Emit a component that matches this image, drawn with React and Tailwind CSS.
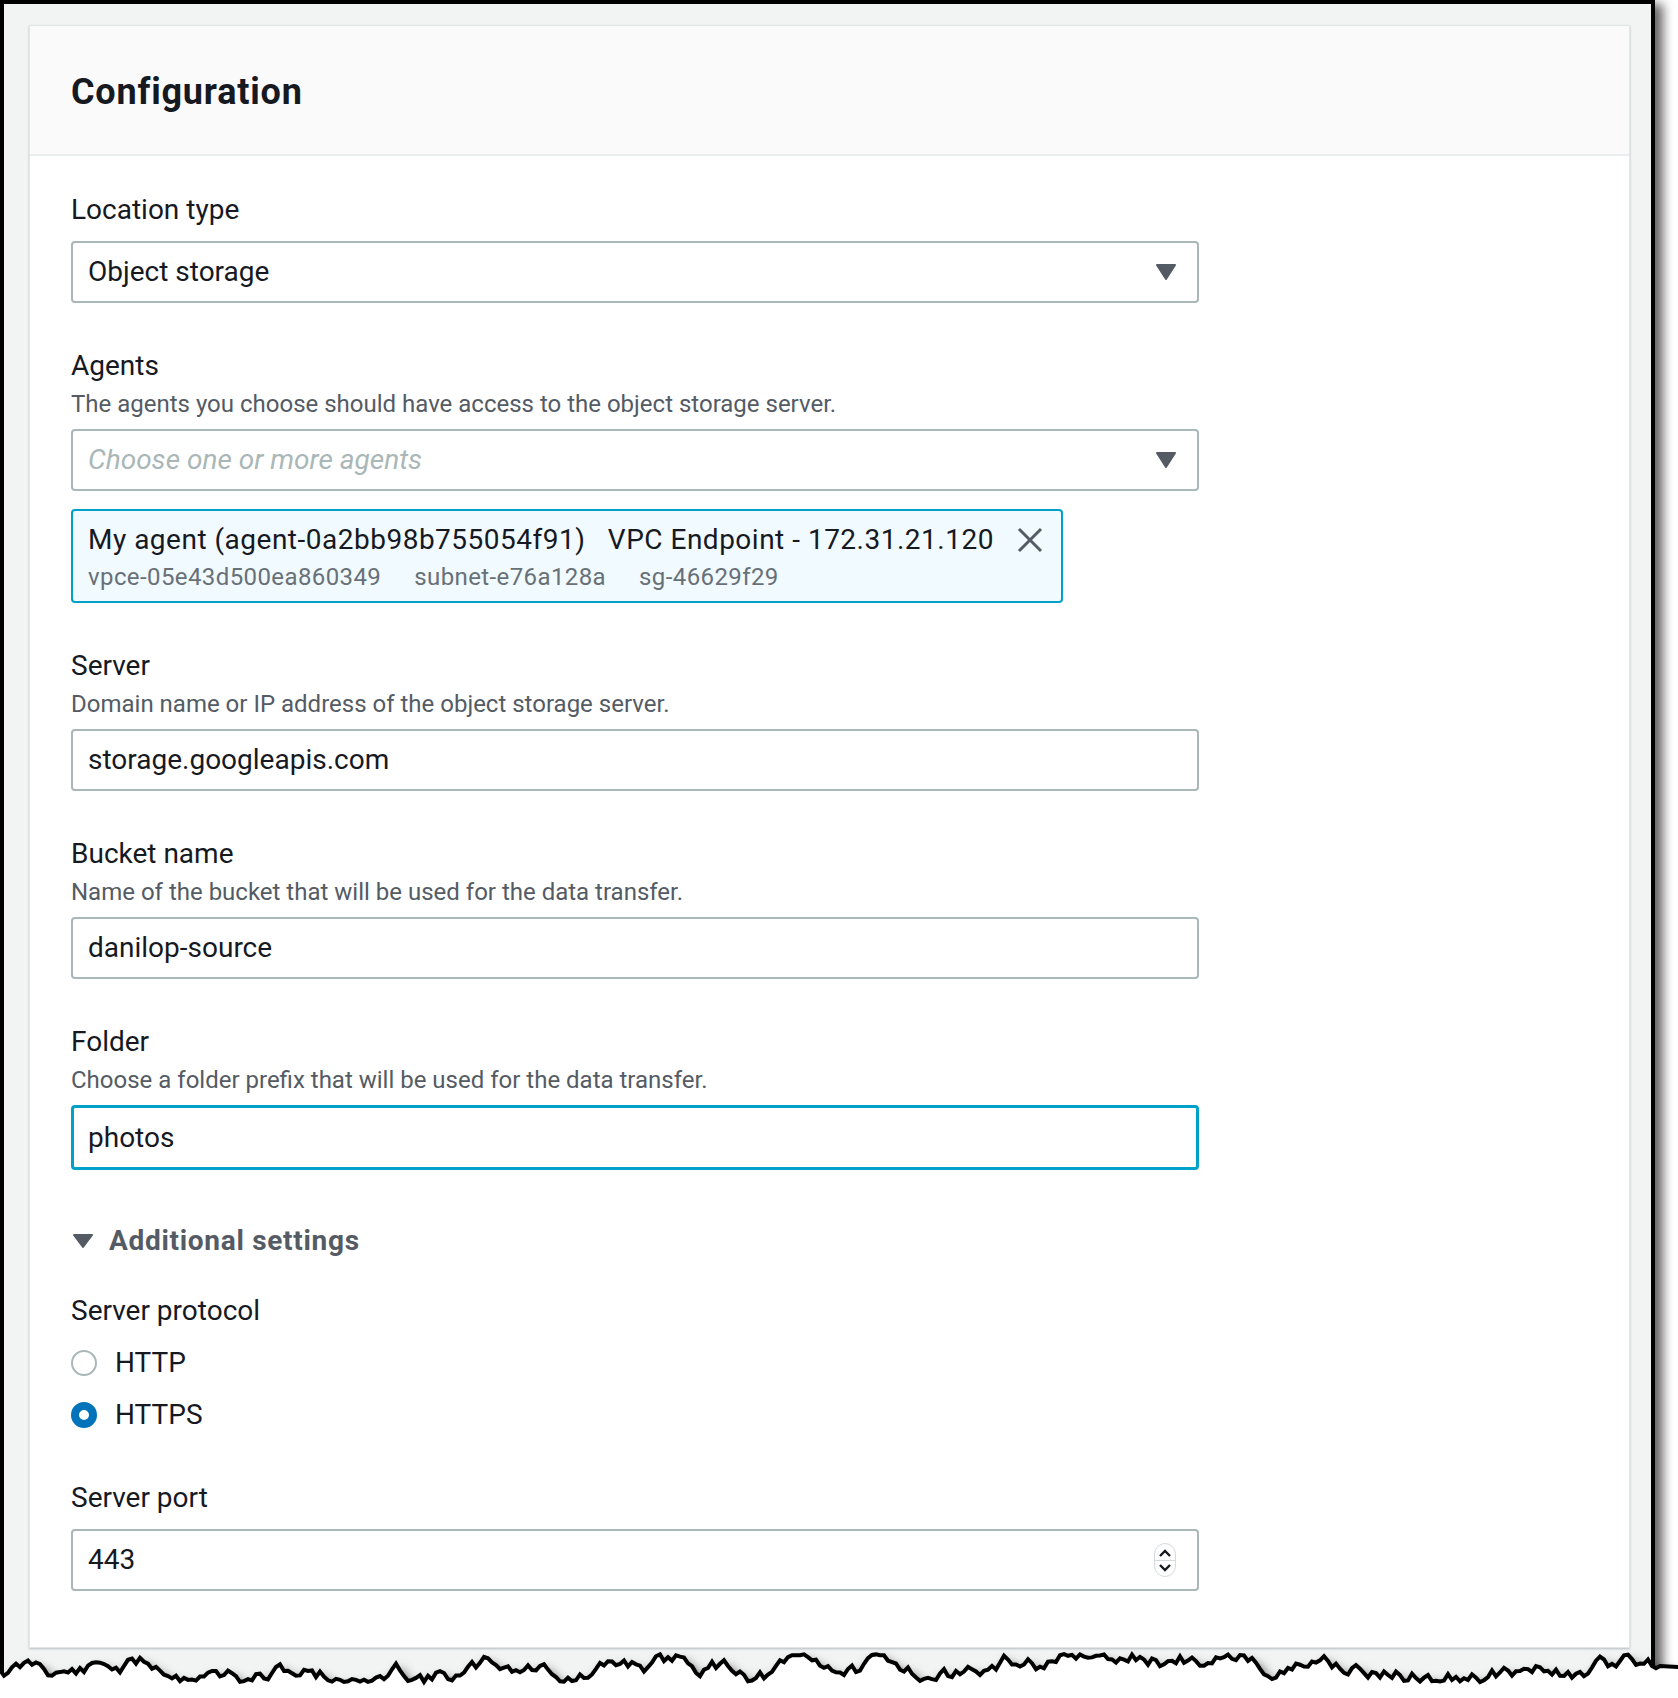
import React from 'react';

const font = { fontFamily: 'Roboto, "Noto Sans", sans-serif' };

function jagged() {
  // deterministic torn edge
  let seed = 11;
  const rnd = () => {
    seed = (seed * 9301 + 49297) % 233280;
    return seed / 233280;
  };
  let y = 34;
  let d = 'M -20 34';
  for (let x = 0; x <= 1660; x += 4) {
    y += (rnd() - 0.5) * 14;
    if (y < 20) y = 20 + rnd() * 5;
    if (y > 48) y = 48 - rnd() * 5;
    d += ` L ${x} ${y.toFixed(1)}`;
  }
  d += ' L 1700 34 L 1700 120 L -20 120 Z';
  return d;
}

function Caret() {
  return (
    <svg width="20" height="16" viewBox="0 0 20 16">
      <path d="M1 1 H19 L10 15 Z" fill="#545b64" stroke="#545b64" strokeWidth="2" strokeLinejoin="round" />
    </svg>
  );
}

function Label({ children, desc }) {
  return (
    <div className="mb-[7px]">
      <div className="text-[28px] leading-[40px] text-[#16191f]">{children}</div>
      {desc && <div className="text-[24px] leading-[36px] text-[#545b64]">{desc}</div>}
    </div>
  );
}

function Box({ children, focus, right }) {
  return (
    <div
      className={
        'w-[1128px] rounded-[4px] bg-white flex items-center pr-[21px] ' +
        (focus ? 'h-[65px] border-[3px] border-[#00a1c9] pl-[14px]' : 'h-[62px] border-2 border-[#aab7b8] pl-[15px]')
      }
    >
      <div className="flex-1 text-[28px] text-[#16191f]">{children}</div>
      {right}
    </div>
  );
}

function Spinner() {
  return (
    <div className="w-[22px] h-[34px] rounded-full border border-[#d5dbdb] flex flex-col items-center justify-center bg-white">
      <svg width="14" height="10" viewBox="0 0 14 10">
        <path d="M2 7 L7 2 L12 7" fill="none" stroke="#16191f" strokeWidth="2.4" />
      </svg>
      <div className="w-full h-px bg-[#d5dbdb] my-[1px]" />
      <svg width="14" height="10" viewBox="0 0 14 10">
        <path d="M2 3 L7 8 L12 3" fill="none" stroke="#16191f" strokeWidth="2.4" />
      </svg>
    </div>
  );
}

export default function App() {
  return (
    <div className="w-[1678px] h-[1698px] bg-white relative overflow-hidden" style={font}>
      <div className="w-[1655px] h-[1690px] border-[4px] border-b-0 border-black bg-[#f2f3f3] pt-[21px] pl-[25px] shadow-[8px_4px_10px_rgba(0,0,0,0.6)]">
        <div className="w-[1601px] h-[1623px] bg-white border border-[#e3e6e6] shadow-[0_1px_2px_rgba(0,28,36,0.25)]">
          <div className="h-[130px] bg-[#fafafa] border-b-2 border-[#eaeded] flex items-center pl-[41px]">
            <h2 className="text-[36px] font-bold text-[#16191f] tracking-[0.8px] pt-[4px]">Configuration</h2>
          </div>

          <div className="pl-[41px] pt-[34px]">
            <div className="text-[28px] leading-[40px] text-[#16191f] mb-[11px]">Location type</div>
            <Box right={<Caret />}>Object storage</Box>

            <div className="mt-[43px]">
              <Label desc="The agents you choose should have access to the object storage server.">Agents</Label>
              <Box right={<Caret />}>
                <span className="italic text-[#aab7b8]">Choose one or more agents</span>
              </Box>
              <div className="mt-[18px] w-[992px] h-[94px] rounded-[4px] border-2 border-[#00a1c9] bg-[#f1faff] pl-[15px] pr-[18px] flex items-start pt-[9px]">
                <div className="flex-1">
                  <div className="text-[28px] leading-[40px] text-[#16191f] whitespace-pre tracking-[0.5px]">
                    My agent (agent-0a2bb98b755054f91)   VPC Endpoint - 172.31.21.120
                  </div>
                  <div className="text-[24px] leading-[34px] text-[#687078] flex gap-[33px] tracking-[0.4px]">
                    <span>vpce-05e43d500ea860349</span>
                    <span>subnet-e76a128a</span>
                    <span>sg-46629f29</span>
                  </div>
                </div>
                <svg width="26" height="26" viewBox="0 0 26 26" className="mt-[7px]">
                  <path d="M2 2 L24 24 M24 2 L2 24" stroke="#545b64" strokeWidth="3" />
                </svg>
              </div>
            </div>

            <div className="mt-[43px]">
              <Label desc="Domain name or IP address of the object storage server.">Server</Label>
              <Box>storage.googleapis.com</Box>
            </div>

            <div className="mt-[43px]">
              <Label desc="Name of the bucket that will be used for the data transfer.">Bucket name</Label>
              <Box>danilop-source</Box>
            </div>

            <div className="mt-[43px]">
              <Label desc="Choose a folder prefix that will be used for the data transfer.">Folder</Label>
              <Box focus>photos</Box>
            </div>

            <div className="mt-[51px] flex items-center h-[40px]">
              <svg width="22" height="16" viewBox="0 0 22 16" className="ml-[1px] mr-[15px]">
                <path d="M2 2 H20 L11 14 Z" fill="#545b64" stroke="#545b64" strokeWidth="2" strokeLinejoin="round" />
              </svg>
              <span className="text-[28px] font-bold text-[#545b64] tracking-[0.7px]">Additional settings</span>
            </div>

            <div className="mt-[30px]">
              <div className="text-[28px] leading-[40px] text-[#16191f]">Server protocol</div>
              <div className="flex items-center h-[52px] mt-[6px]">
                <span className="w-[26px] h-[26px] rounded-full border-2 border-[#aab7b8] bg-white" />
                <span className="ml-[18px] text-[28px] text-[#16191f]">HTTP</span>
              </div>
              <div className="flex items-center h-[52px]">
                <span className="w-[26px] h-[26px] rounded-full border-[8px] border-[#0073bb] bg-white" />
                <span className="ml-[18px] text-[28px] text-[#16191f]">HTTPS</span>
              </div>
            </div>

            <div className="mt-[37px]">
              <div className="text-[28px] leading-[40px] text-[#16191f] mb-[11px]">Server port</div>
              <Box right={<Spinner />}>443</Box>
            </div>
          </div>
        </div>
      </div>

      <svg
        className="absolute left-0 top-[1634px]"
        width="1678"
        height="64"
        viewBox="0 0 1678 64"
        style={{ filter: 'drop-shadow(4px 9px 6px rgba(0,0,0,0.85))' }}
      >
        <path d={jagged()} fill="#ffffff" stroke="#000000" strokeWidth="4" strokeLinejoin="miter" />
      </svg>
    </div>
  );
}
